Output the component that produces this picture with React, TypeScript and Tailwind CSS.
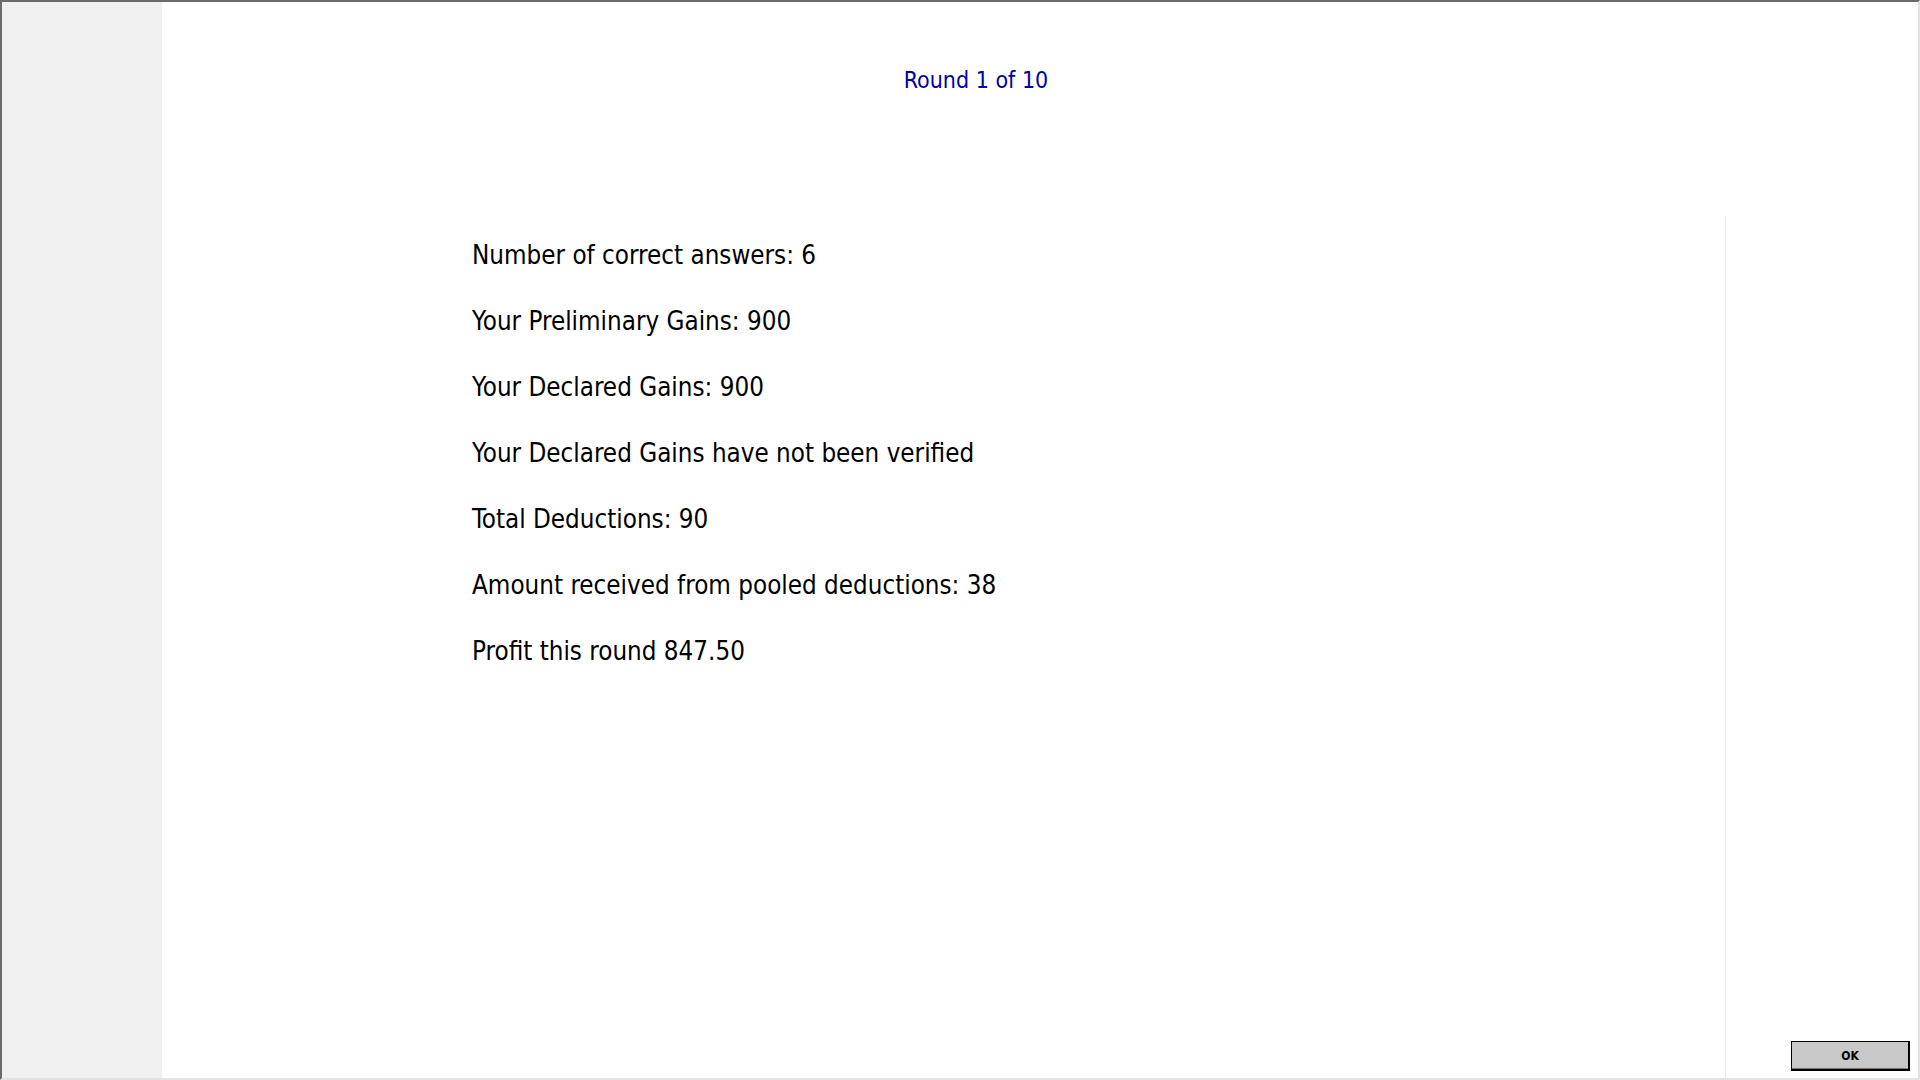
import * as React from "react"

const lines = [
  "Number of correct answers: 6",
  "Your Preliminary Gains: 900",
  "Your Declared Gains: 900",
  "Your Declared Gains have not been verified",
  "Total Deductions: 90",
  "Amount received from pooled deductions: 38",
  "Profit this round 847.50",
]

const font = { fontFamily: '"DejaVu Sans Condensed", "DejaVu Sans", sans-serif' }

export default function App() {
  return (
    <div
      className="flex h-screen w-screen overflow-hidden border-t-2 border-l-2 border-r-2 border-b-2 border-t-[#6b6b6b] border-l-[#6b6b6b] border-r-[#e3e3e3] border-b-[#e3e3e3] bg-white"
      style={font}
    >
      {/* left gray strip */}
      <div className="w-[160px] shrink-0 bg-[#f0f0f0]" />

      <div className="flex flex-1 flex-col">
        <div className="flex justify-center pr-[128px] pt-[65px]">
          <h1 className="text-[23px] leading-[27px] text-[#0000a8]">Round 1 of 10</h1>
        </div>

        <div className="mt-[123px] flex flex-1">
          <div className="w-[1564px] shrink-0 border-r border-[#ececec] pl-[310px] pt-[5px]">
            {lines.map((line) => (
              <p key={line} className="text-[25.75px] leading-[66px] text-black">
                {line}
              </p>
            ))}
          </div>
          <div className="flex flex-1 items-end justify-end pr-[8px] pb-[7px]">
            <button className="h-[30px] w-[119px] border-t border-l border-black border-r-2 border-b-2 border-r-black border-b-black bg-[#c8c8c8] text-[12px] font-bold text-black shadow-[inset_0_-1px_0_#7a7a7a]">
              OK
            </button>
          </div>
        </div>
      </div>
    </div>
  )
}
